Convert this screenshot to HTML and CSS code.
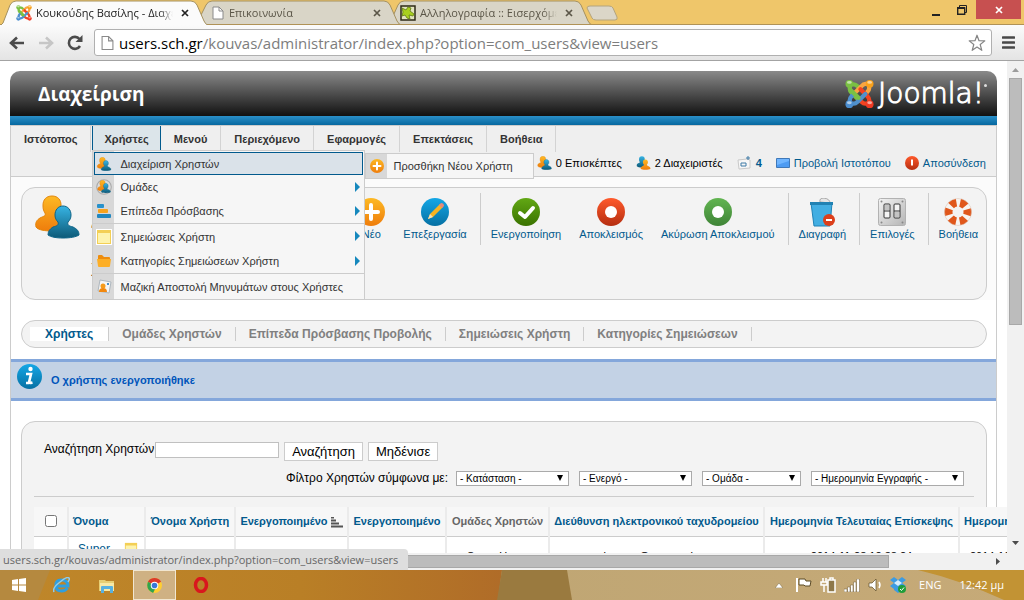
FILE: index.html
```html
<!DOCTYPE html>
<html lang="el">
<head>
<meta charset="utf-8">
<title>Κουκούδης Βασίλης - Διαχείριση</title>
<link rel="stylesheet" href="styles.css">
</head>
<body>
<svg class="defs" width="0" height="0" aria-hidden="true">
  <defs>
    <linearGradient id="gOrange" x1="0" y1="0" x2="0" y2="1"><stop offset="0" stop-color="#fdb924"/><stop offset="1" stop-color="#ef7d0c"/></linearGradient>
    <linearGradient id="gBlue" x1="0" y1="0" x2="0" y2="1"><stop offset="0" stop-color="#37b4e4"/><stop offset="1" stop-color="#0d5a78"/></linearGradient>
    <linearGradient id="gSky" x1="0" y1="0" x2="0" y2="1"><stop offset="0" stop-color="#14a7e6"/><stop offset="1" stop-color="#0670a3"/></linearGradient>
    <linearGradient id="gGreen" x1="0" y1="0" x2="0" y2="1"><stop offset="0" stop-color="#62a814"/><stop offset="1" stop-color="#3a7200"/></linearGradient>
    <linearGradient id="gGreen2" x1="0" y1="0" x2="0" y2="1"><stop offset="0" stop-color="#62b551"/><stop offset="1" stop-color="#3f8437"/></linearGradient>
    <linearGradient id="gRed" x1="0" y1="0" x2="0" y2="1"><stop offset="0" stop-color="#ff5a2c"/><stop offset="1" stop-color="#b52e10"/></linearGradient>
    <linearGradient id="gSteel" x1="0" y1="0" x2="1" y2="1"><stop offset="0" stop-color="#f4f4f4"/><stop offset="1" stop-color="#b4b4b4"/></linearGradient>
    <symbol id="joomla" viewBox="0 0 30 30">
      <g fill="none" stroke-width="4.400" stroke-linecap="round" stroke-linejoin="round">
        <path d="M5 6V10Q5 12 7 14L15 22" stroke="#7ac143"/>
        <path d="M5 5H9Q11 5 13 7L15 9" stroke="#7ac143"/>
        <path d="M25 4.500H21Q19 4.500 17 7L9 15" stroke="#f9a541"/>
        <path d="M25 5V9Q25 11 23 13L21 15" stroke="#f9a541"/>
        <path d="M25 25V21Q25 19 23 17L16 10" stroke="#f44321"/>
        <path d="M25 25H21Q19 25 17 23L15 21" stroke="#f44321"/>
        <path d="M5 25H9Q11 25 13 23L21 15" stroke="#5091cd"/>
        <path d="M5 25V21Q5 19 7 17L9 15" stroke="#5091cd"/>
        <path d="M6 11L14 19" stroke="#7ac143"/>
      </g>
      <circle cx="4.500" cy="4.500" r="4" fill="#7ac143"/><circle cx="25.500" cy="4.500" r="4" fill="#f9a11b"/>
      <circle cx="25.500" cy="25.500" r="4" fill="#f03a24"/><circle cx="4.500" cy="25.500" r="4" fill="#4b8ed0"/>
      <g fill="#fff" opacity=".55"><ellipse cx="4.500" cy="3" rx="2.500" ry="1.500"/><ellipse cx="25.500" cy="3" rx="2.500" ry="1.500"/><ellipse cx="25.500" cy="24" rx="2.500" ry="1.500"/><ellipse cx="4.500" cy="24" rx="2.500" ry="1.500"/></g>
    </symbol>
    <symbol id="users" viewBox="0 0 46 44">
      <path d="M18 1c6 0 9 4 9 9 0 4-1 6-3 9-1 3 1 4 4 5 3 2 4 4 4 9-3 2-7 3-14 3S4 35 2 32c-1-5 1-7 4-9 4-2 6-2 5-5-2-3-2-5-2-8 0-5 3-9 9-9z" fill="url(#gOrange)" stroke="#e3860b"/>
      <path d="M29 11c5 0 8 4 8 9 0 3-1 5-3 7-1 3 1 4 5 5 4 2 6 4 6 8-3 2-9 3-16 3s-12-1-15-3c0-4 2-6 5-8 4-1 6-2 5-5-2-2-3-4-3-7 0-5 3-9 8-9z" fill="url(#gBlue)" stroke="#0d6488"/>
    </symbol>
    <symbol id="users2" viewBox="0 0 46 44">
      <path d="M18 1c6 0 9 4 9 9 0 4-1 6-3 9-1 3 1 4 4 5 3 2 4 4 4 9-3 2-7 3-14 3S4 35 2 32c-1-5 1-7 4-9 4-2 6-2 5-5-2-3-2-5-2-8 0-5 3-9 9-9z" fill="url(#gBlue)"/>
      <path d="M29 11c5 0 8 4 8 9 0 3-1 5-3 7-1 3 1 4 5 5 4 2 6 4 6 8-3 2-9 3-16 3s-12-1-15-3c0-4 2-6 5-8 4-1 6-2 5-5-2-2-3-4-3-7 0-5 3-9 8-9z" fill="url(#gOrange)"/>
    </symbol>
    <symbol id="plus" viewBox="0 0 28 28"><circle cx="14" cy="14" r="14" fill="url(#gOrange)"/><path d="M14 7V21M7 14H21" stroke="#fff" stroke-width="4" stroke-linecap="round"/></symbol>
    <symbol id="note" viewBox="0 0 16 16"><path d="M0 0h16v16H0z" fill="#fff"/><path d="M1 1h14v14H1z" fill="#f3cf55"/><path d="M2 4h12v10H2z" fill="#fdf3ae"/></symbol>
    <symbol id="page" viewBox="0 0 12 14"><path d="M1 1h6l4 4v8H1z" fill="#fff" stroke="#8a8a8a"/><path d="M7 1v4h4" fill="none" stroke="#8a8a8a"/></symbol>
    <symbol id="x" viewBox="0 0 8 8"><path d="M1 1l6 6M7 1l-6 6" stroke="currentColor" stroke-width="1.700"/></symbol>
  </defs>
</svg>

<header class="tabs">
  <svg class="tabs-art" width="640" height="25" viewBox="0 0 640 25" aria-hidden="true">
    <path d="M389 25l9-20q2-4 6-4H575q4 0 6 4l7 16q2 4 5 4z" fill="#d9d5c7" stroke="#a5915f"/>
    <path d="M196 25L206 5q2-4 6-4H384q4 0 6 4l7 16q2 4 5 4z" fill="#d9d5c7" stroke="#a5915f"/>
    <path d="M0 24.500H640" stroke="#b09256"/>
    <path d="M0 26l3-3L10 5q2-4 6-4H191q4 0 6 4l7 16q1 3 5 5z" fill="#fbfbfb" stroke="#a5915f"/>
    <path d="M587 8q0-2 3-2h19q3 0 4 2l4 9q1 3-2 3h-19q-3 0-4-2z" fill="#dbd6c8" stroke="#b3a47e"/>
  </svg>
  <div class="tab tab-on"><svg width="16" height="16"><use href="#joomla"/></svg><span class="tab-title">Κουκούδης Βασίλης - Διαχείριση</span><button class="tab-x" aria-label="Κλείσιμο καρτέλας"><svg width="8" height="8"><use href="#x"/></svg></button></div>
  <div class="tab tab-two"><svg width="12" height="14"><use href="#page"/></svg><span class="tab-title">Επικοινωνία</span><button class="tab-x" aria-label="Κλείσιμο καρτέλας"><svg width="8" height="8"><use href="#x"/></svg></button></div>
  <div class="tab tab-three"><svg width="16" height="16" viewBox="0 0 16 16"><path d="M1 1h14v14H1z" fill="#e2e3bd" stroke="#2e2a17" stroke-width="1.500"/><path d="M2 3l4 2 2-3 3 1-1 3 4 3-1 2-4-1 1 4-3-1-2-3-3 1 1-4z" fill="#a9d01e" stroke="#5e7a10" stroke-width=".800"/></svg><span class="tab-title">Αλληλογραφία :: Εισερχόμενα</span><button class="tab-x" aria-label="Κλείσιμο καρτέλας"><svg width="8" height="8"><use href="#x"/></svg></button></div>
  <div class="win">
    <button class="win-btn" aria-label="Ελαχιστοποίηση"><svg width="8" height="12" viewBox="0 0 8 12"><path d="M0 10h8v2H0z" fill="#222"/></svg></button>
    <button class="win-btn" aria-label="Επαναφορά"><svg width="10" height="10" viewBox="0 0 10 10"><path d="M2.500 2V.500h7v7H8" fill="none" stroke="#222"/><path d="M.700 3h7v6.300h-7z" fill="none" stroke="#222" stroke-width="1.400"/><path d="M0 2h8v2H0z" fill="#222"/></svg></button>
    <button class="win-btn win-close" aria-label="Κλείσιμο"><svg width="8" height="8"><use href="#x"/></svg></button>
  </div>
</header>

<div class="bar">
  <button class="bar-btn" aria-label="Πίσω"><svg width="16" height="14" viewBox="0 0 16 14"><path d="M15 7H3M8 1.500L2 7l6 5.500" fill="none" stroke="#4b4b4b" stroke-width="2.600"/></svg></button>
  <button class="bar-btn" aria-label="Εμπρός"><svg width="16" height="14" viewBox="0 0 16 14"><path d="M1 7h12M8 1.500L14 7l-6 5.500" fill="none" stroke="#c6c6c6" stroke-width="2.600"/></svg></button>
  <button class="bar-btn" aria-label="Ανανέωση"><svg width="16" height="16" viewBox="0 0 16 16"><path d="M13 11A6 6 0 1 1 12.500 4" fill="none" stroke="#4b4b4b" stroke-width="2.600"/><path d="M15.500 0v7h-7z" fill="#4b4b4b"/></svg></button>
  <div class="url">
    <svg width="13" height="16" viewBox="0 0 12 14"><use href="#page"/></svg>
    <span class="url-text"><b>users.sch.gr</b>/kouvas/administrator/index.php?option=com_users&amp;view=users</span>
    <svg width="18" height="18" viewBox="0 0 18 18"><path d="M9 1.200l2 5.500 5.800.200-4.600 3.600 1.600 5.800L9 13l-4.800 3.300 1.600-5.800L1.200 6.900 7 6.700z" fill="#fff" stroke="#858585" stroke-width="1.200" stroke-linejoin="round"/></svg>
  </div>
  <button class="bar-menu" aria-label="Μενού"><svg width="13" height="13" viewBox="0 0 13 13"><path d="M1 1.500h11M1 6.500h11M1 11.500h11" stroke="#484848" stroke-width="2.600" stroke-linecap="round"/></svg></button>
</div>

<div class="view">
  <main class="page">
    <div class="head">
      <h1>Διαχείριση</h1>
      <div class="brand"><svg width="29" height="30"><use href="#joomla"/></svg><span>Joomla!</span><i></i></div>
    </div>
    <div class="frame">
      <nav class="nav">
        <ul class="menu">
          <li><a href="#">Ιστότοπος</a></li>
          <li class="open"><a href="#">Χρήστες</a>
            <ul class="drop">
              <li class="hot"><svg width="15" height="14"><use href="#users"/></svg><a href="#">Διαχείριση Χρηστών</a>
                <ul class="fly"><li><svg width="14" height="14"><use href="#plus"/></svg><a href="#">Προσθήκη Νέου Χρήστη</a></li></ul>
              </li>
              <li class="more"><svg width="16" height="16" viewBox="0 0 46 46"><circle cx="23" cy="23" r="21" fill="#dcdcdc" stroke="#aaa" stroke-width="3"/><use href="#users" x="3" y="3" width="40" height="38"/></svg><a href="#">Ομάδες</a></li>
              <li class="more"><svg width="16" height="16" viewBox="0 0 16 16"><rect x="1" y="1" width="7" height="4" rx="1" fill="#2791cb"/><rect x="2" y="6" width="10" height="4" rx="1" fill="#f7a31d"/><rect x="1" y="11" width="14" height="4" rx="1" fill="#2187c0"/></svg><a href="#">Επίπεδα Πρόσβασης</a></li>
              <li class="more split"><svg width="16" height="16"><use href="#note"/></svg><a href="#">Σημειώσεις Χρήστη</a></li>
              <li class="more"><svg width="16" height="12" viewBox="0 0 16 12"><path d="M2 4V1q0-1 1-1h3l2 2h5q1 0 1 1v1z" fill="#ee8d0d"/><path d="M1 4h14l-1 7q0 1-1 1H3q-1 0-1-1z" fill="#fcae26"/></svg><a href="#">Κατηγορίες Σημειώσεων Χρήστη</a></li>
              <li class="split"><svg width="16" height="16" viewBox="0 0 16 16"><path d="M4 1l11 2-2 11-11-2z" fill="#f5f5f5" stroke="#aeb7bf"/><circle cx="7" cy="7" r="2.500" fill="#f59b1c"/><path d="M3 13q0-4 4-4t4 4z" fill="#f2880f"/><path d="M11 4h2v2h-2z" fill="#4a90c8"/></svg><a href="#">Μαζική Αποστολή Μηνυμάτων στους Χρήστες</a></li>
            </ul>
          </li>
          <li><a href="#">Μενού</a></li>
          <li><a href="#">Περιεχόμενο</a></li>
          <li><a href="#">Εφαρμογές</a></li>
          <li><a href="#">Επεκτάσεις</a></li>
          <li><a href="#">Βοήθεια</a></li>
        </ul>
        <div class="status">
          <span><svg width="15" height="14"><use href="#users"/></svg>0 Επισκέπτες</span>
          <span><svg width="15" height="14"><use href="#users2"/></svg>2 Διαχειριστές</span>
          <a href="#"><svg width="15" height="14" viewBox="0 0 15 14"><path d="M1 4l9-1 3 1v8l-11 1z" fill="#f7f7f7" stroke="#c9c9c9"/><path d="M4 7h5v3H4zM10 1h2v2h-2z" fill="none" stroke="#3f7ba6"/></svg><b>4</b></a>
          <a href="#"><svg width="14" height="10" viewBox="0 0 14 10"><path d="M.500.500h13v9H.500z" fill="#6fb5ff" stroke="#3f78b8"/><path d="M1 7l12-4v6H1z" fill="#4d9bf2"/></svg>Προβολή Ιστοτόπου</a>
          <a href="#"><svg width="14" height="14" viewBox="0 0 14 14"><circle cx="7" cy="7" r="7" fill="url(#gRed)"/><path d="M7 3.500v6" stroke="#fff" stroke-width="2"/></svg>Αποσύνδεση</a>
        </div>
      </nav>

      <section class="top">
        <div class="tools">
          <svg width="46" height="44"><use href="#users"/></svg>
          <h2>Διαχείριση Χρηστών</h2>
          <div class="acts">
            <a href="#"><svg width="28" height="29" viewBox="0 0 28 29"><use href="#plus" width="28" height="28"/></svg>Νέο</a>
            <a href="#"><svg width="28" height="29" viewBox="0 0 28 29"><circle cx="14" cy="14" r="14" fill="url(#gSky)"/><path d="M7 21l2-5L19 6l3 3-10 10z" fill="#f7b322"/><path d="M7 21l2-5 3 3z" fill="#f5dfb8"/><path d="M18 7l2-2q3 0 3 3l-2 2z" fill="#e5897c"/></svg>Επεξεργασία</a>
            <hr>
            <a href="#"><svg width="28" height="29" viewBox="0 0 28 29"><circle cx="14" cy="14" r="14" fill="url(#gGreen)"/><path d="M8 15l5 4 8-9" fill="none" stroke="#fff" stroke-width="4" stroke-linecap="round" stroke-linejoin="round"/></svg>Ενεργοποίηση</a>
            <a href="#"><svg width="28" height="29" viewBox="0 0 28 29"><circle cx="14" cy="14" r="14" fill="url(#gRed)"/><circle cx="14" cy="14" r="6" fill="#fff"/></svg>Αποκλεισμός</a>
            <a href="#"><svg width="28" height="29" viewBox="0 0 28 29"><circle cx="14" cy="14" r="14" fill="url(#gGreen2)"/><circle cx="14" cy="14" r="6" fill="#fff"/></svg>Ακύρωση Αποκλεισμού</a>
            <hr>
            <a href="#"><svg width="28" height="29" viewBox="0 0 28 29"><path d="M12 4q-1-4 4-4 6 1 6 5z" fill="#e6e6e6" stroke="#a7a7a7"/><path d="M3 5h21l-2 23H6z" fill="#42aee2" stroke="#1f82b6"/><path d="M2 4h23v3H2z" fill="#2182b3"/><circle cx="21" cy="22" r="6" fill="#dc3f1b"/><path d="M18 22h6" stroke="#fff" stroke-width="2"/></svg>Διαγραφή</a>
            <hr>
            <a href="#"><svg width="28" height="29" viewBox="0 0 28 29"><rect x=".500" y=".500" width="27" height="27" rx="2" fill="url(#gSteel)" stroke="#b2b2b2"/><g fill="#888"><circle cx="3.500" cy="3.500" r="1"/><circle cx="24.500" cy="3.500" r="1"/><circle cx="3.500" cy="24.500" r="1"/><circle cx="24.500" cy="24.500" r="1"/></g><rect x="6" y="6" width="6" height="14" rx="1" fill="#f4f4f4" stroke="#333"/><rect x="16" y="6" width="6" height="14" rx="1" fill="#f4f4f4" stroke="#333"/><path d="M7 7h4v5H7zM17 14h4v5h-4z" fill="#c4c4c4"/><path d="M6 13h6M16 13h6" stroke="#333"/></svg>Επιλογές</a>
            <hr>
            <a href="#"><svg width="28" height="29" viewBox="0 0 28 29"><circle cx="14" cy="14" r="9.500" fill="none" stroke="#f7f4f1" stroke-width="8"/><circle cx="14" cy="14" r="9.500" fill="none" stroke="#e0571b" stroke-width="8" stroke-dasharray="6.200 3.748" stroke-dashoffset="3.100"/><circle cx="14" cy="14" r="13.500" fill="none" stroke="#d9bfae" stroke-width=".500"/></svg>Βοήθεια</a>
          </div>
        </div>
      </section>

      <ul class="subs">
        <li class="cur"><a href="#">Χρήστες</a></li><li><a href="#">Ομάδες Χρηστών</a></li><li><a href="#">Επίπεδα Πρόσβασης Προβολής</a></li><li><a href="#">Σημειώσεις Χρήστη</a></li><li><a href="#">Κατηγορίες Σημειώσεων</a></li>
      </ul>

      <div class="msg"><svg width="25" height="25" viewBox="0 0 25 25"><circle cx="12.500" cy="12.500" r="12.500" fill="url(#gSky)"/><circle cx="13.500" cy="5" r="2.200" fill="#fff"/><path d="M9 10h5l-2 8.500q0 1 3.500 0M9 19h3" fill="none" stroke="#fff" stroke-width="2.600"/></svg><span>Ο χρήστης ενεργοποιήθηκε</span></div>

      <section class="list">
        <form class="search">
          <label for="q">Αναζήτηση Χρηστών</label><input id="q" type="text"><button type="button">Αναζήτηση</button><button type="button">Μηδένισε</button>
        </form>
        <div class="filters">
          <label for="f1">Φίλτρο Χρηστών σύμφωνα με:</label>
          <span class="sel sel-m"><select id="f1"><option>- Κατάσταση -</option></select></span>
          <span class="sel sel-m"><select aria-label="Ενεργό"><option>- Ενεργό -</option></select></span>
          <span class="sel sel-s"><select aria-label="Ομάδα"><option>- Ομάδα -</option></select></span>
          <span class="sel sel-l"><select aria-label="Ημερομηνία Εγγραφής"><option>- Ημερομηνία Εγγραφής -</option></select></span>
        </div>
        <table>
          <colgroup><col class="c1"><col class="c2"><col class="c3"><col class="c4"><col class="c5"><col class="c6"><col class="c7"><col class="c8"><col class="c9"></colgroup>
          <thead><tr>
            <th><input type="checkbox" aria-label="Επιλογή όλων"></th>
            <th class="left"><a href="#">Όνομα</a></th>
            <th><a href="#">Όνομα Χρήστη</a></th>
            <th><a href="#">Ενεργοποιημένο <svg width="12" height="11" viewBox="0 0 12 11"><path d="M0 .500h3M0 3.500h5M0 6.500h8M0 9.500h12" stroke="#555" stroke-width="2"/></svg></a></th>
            <th><a href="#">Ενεργοποιημένο</a></th>
            <th class="plain">Ομάδες Χρηστών</th>
            <th><a href="#">Διεύθυνση ηλεκτρονικού ταχυδρομείου</a></th>
            <th><a href="#">Ημερομηνία Τελευταίας Επίσκεψης</a></th>
            <th class="left"><a href="#">Ημερομηνία Εγγραφής</a></th>
          </tr></thead>
          <tbody><tr>
            <td></td>
            <td class="who"><a href="#">Super User</a><svg width="14" height="14"><use href="#note"/></svg></td>
            <td></td><td></td><td></td><td>Super Users</td><td>kouvas@users.sch.gr</td><td>2014-11-28 12:38:24</td><td>2014-10-20 10:12:30</td>
          </tr></tbody>
        </table>
      </section>
    </div>
  </main>
  <div class="vbar"><svg width="7" height="5" viewBox="0 0 7 5"><path d="M0 4l3.500-4L7 4z" fill="#9c9c9c"/></svg><div class="vthumb"></div><svg width="7" height="5" viewBox="0 0 7 5"><path d="M0 0h7L3.500 4z" fill="#4c4c4c"/></svg></div>
</div>
<div class="hbar"><div class="hthumb"></div><svg width="5" height="7" viewBox="0 0 5 7"><path d="M0 0v7l4-3.500z" fill="#4c4c4c"/></svg><div class="tip">users.sch.gr/kouvas/administrator/index.php?option=com_users&amp;view=users</div></div>

<footer class="task">
  <svg class="task-art" viewBox="0 0 1024 30" preserveAspectRatio="none" aria-hidden="true">
    <defs><linearGradient id="t1"><stop offset="0" stop-color="#bf872a"/><stop offset=".600" stop-color="#b97f26"/><stop offset="1" stop-color="#b06c28"/></linearGradient><linearGradient id="t2"><stop offset="0" stop-color="#b9a26f"/><stop offset="1" stop-color="#c6aa78"/></linearGradient></defs>
    <path d="M0 0h1024v30H0z" fill="url(#t2)"/><path d="M0 0h502l-4 30H0z" fill="url(#t1)"/><path d="M0 0h50L38 30H0z" fill="#b5893f"/><path d="M502 0h65l5 30h-75z" fill="#9a7a3f"/><path d="M918 0h106v30h-20Q960 10 918 0z" fill="#c29334"/>
  </svg>
  <button aria-label="Έναρξη"><svg width="14" height="14" viewBox="0 0 14 14"><path d="M0 2l6-1v5.500H0zM7 1l7-1v6.500H7zM0 7.500h6V13l-6-1zM7 7.500h7V14l-7-1z" fill="#fff"/></svg></button>
  <button aria-label="Internet Explorer"><svg width="17" height="16" viewBox="0 0 17 16"><path d="M4 9h11q0-6-6.500-6T3 9q0 5 5.500 5 4 0 6-3" fill="none" stroke="#2f9fe0" stroke-width="3"/><path d="M1 15q-2-4 6-10 7-6 9-4 1 1-1 4" fill="none" stroke="#8ccdf0" stroke-width="1.500"/></svg></button>
  <button aria-label="Εξερεύνηση"><svg width="16" height="15" viewBox="0 0 16 15"><path d="M0 2h6l1 1h8v10H0z" fill="#e7cf75"/><path d="M1 5h14v8H1z" fill="#f8e9a6"/><path d="M2 15V9q0-1 1-1h10q1 0 1 1v6h-3v-4H5v4z" fill="#58b1e0"/></svg></button>
  <button class="live" aria-label="Chrome"><svg width="15" height="15" viewBox="0 0 16 16"><circle cx="8" cy="8" r="8" fill="#ffce33"/><path d="M8 8L1 4q2-4 7-4t7 4z" fill="#dc3a2b"/><path d="M8 8L1 4q-3 8 5.500 12L10 9z" fill="#31a350"/><circle cx="8" cy="8" r="4" fill="#fff"/><circle cx="8" cy="8" r="3" fill="#3878d6"/></svg></button>
  <button aria-label="Opera"><svg width="16" height="16" viewBox="0 0 16 16"><ellipse cx="8" cy="8" rx="5.500" ry="6.500" fill="none" stroke="#d9171d" stroke-width="3.500"/></svg></button>
  <div class="tray">
    <svg class="tray-up" width="8" height="5" viewBox="0 0 8 5"><path d="M0 5l4-5 4 5z" fill="#fff" stroke="#77653f" stroke-width=".500"/></svg>
    <svg width="16" height="16" viewBox="0 0 16 16"><path d="M1 1v14" stroke="#fff" stroke-width="2"/><path d="M3 2h6l1 2h5l-1 5H9L8 8H3z" fill="#fff" stroke="#5b4a25"/></svg>
    <svg width="16" height="16" viewBox="0 0 16 16"><path d="M3 1v4M6 1v4M1 5h6v3H1zM4 8v7" stroke="#fff" stroke-width="1.500" fill="none"/><path d="M8 3h7v12H8zM10 1h3v2h-3z" fill="#8e784a" stroke="#fff" stroke-width="1.500"/></svg>
    <svg width="16" height="13" viewBox="0 0 16 13"><path d="M0 10h3v3H0zM3.500 8h2.500v5H3.500zM6.500 6H9v7H6.500zM9.500 3H12v10H9.500zM12.500 0h3v13h-3z" fill="#fff" stroke="#6e5b33" stroke-width=".500"/></svg>
    <svg width="14" height="14" viewBox="0 0 14 14"><path d="M1 5h3l4-4v12L4 9H1z" fill="#fff" stroke="#5b4a25" stroke-width=".700"/><path d="M11 4q2 3 0 6" fill="none" stroke="#fff" stroke-width="1.500"/></svg>
    <svg width="16" height="16" viewBox="0 0 16 16"><path d="M0 3l4-3 4 3 4-3 4 3-4 3 4 3-4 3v1l-4 3-4-3v-1L0 9l4-3z" fill="#3c9be2"/><path d="M4 6l4-3 4 3-4 3z" fill="#d4ecfb"/><circle cx="12" cy="12" r="4" fill="#1f9e3a"/><path d="M10 12l1.500 1.500L14 10.500" fill="none" stroke="#fff"/></svg>
    <span>ENG</span><span class="clock">12:42 μμ</span>
  </div>
</footer>
</body>
</html>
```
FILE: styles.css
```css
* { box-sizing: border-box; }
html, body { height: 100%; margin: 0; }
body { display: flex; flex-direction: column; overflow: hidden; background: #fff; color: #000; font: 11px/14px "Liberation Sans", Arial, sans-serif; }
ul { list-style: none; margin: 0; padding: 0; }
a { color: #025a8d; text-decoration: none; }
button { border: 0; background: none; padding: 0; color: inherit; font: inherit; }
svg { flex: none; }
.defs { position: absolute; }

/* browser chrome */
.tabs { position: relative; display: flex; height: 25px; flex: none; background: #efc66a; font: 11px/16px "Open Sans", "Noto Sans", sans-serif; border-bottom: 1px solid #b09256; }
.tabs-art { position: absolute; left: 0; top: 0; }
.tab { position: relative; display: flex; align-items: center; gap: 5px; width: 196px; padding: 1px 7px 0 16px; color: #5b5648; }
.tab-on { gap: 4px; color: #222; padding-right: 3px; }
.tab-three { gap: 4px; padding: 1px 11px 0 8px; }
.tab-title { flex: 1; overflow: hidden; white-space: nowrap; -webkit-mask-image: linear-gradient(90deg, #000 90%, transparent); mask-image: linear-gradient(90deg, #000 90%, transparent); }
.tab-x { display: flex; padding: 4px; }
.win { display: flex; margin: 0 3px 0 auto; }
.win-btn { display: flex; width: 26px; height: 19px; align-items: center; justify-content: center; }
.win-close { width: 45px; background: #c75050; color: #fff; margin-left: 1px; }
.bar { display: flex; align-items: center; height: 36px; flex: none; padding: 0 9px 0 7px; background: linear-gradient(#fbfbfb, #e4e4e4); border-bottom: 1px solid #a3a3a3; }
.bar-btn { display: flex; width: 29px; padding-left: 2px; }
.url { display: flex; align-items: center; flex: 1; height: 27px; padding: 0 5px 0 6px; gap: 5px; background: #fff; border: 1px solid #b0b0b0; border-radius: 3px; }
.url-text { flex: 1; overflow: hidden; white-space: nowrap; color: #7d7d7d; font: 15px/20px "Open Sans", "Noto Sans", sans-serif; }
.url-text b { font-weight: 400; color: #000; }
.bar-menu { display: flex; padding: 0 0 0 10px; }

/* page */
.view { display: flex; flex: 1; min-height: 0; }
.page { flex: 1; min-width: 0; overflow: hidden; padding: 10px 10px 0; }
.head { display: flex; align-items: center; justify-content: space-between; height: 54px; padding: 0 10px 9px 28px; border-radius: 10px 10px 0 0; background: linear-gradient(#2a8fc8, #0668a0) bottom / 100% 9px no-repeat, linear-gradient(#8a8a8a, #111 45px); color: #fff; }
.head h1 { margin: 0; font: bold 19px/24px "Open Sans", "Noto Sans", sans-serif; }
.brand { display: flex; align-items: center; gap: 4px; font: 200 28px/30px "DejaVu Sans", sans-serif; -webkit-text-stroke: 1px #fff; }
.brand i { width: 3px; height: 3px; margin: -16px 0 0 -4px; border-radius: 2px; background: #ddd; }
.frame { border: solid #ccc; border-width: 0 1px; }
.nav { height: 52px; background: #efefef; border-bottom: 1px solid #ccc; border-top: 1px solid #ccc; }
.menu { display: flex; height: 26px; }
.menu > li { position: relative; border-right: 1px solid #d3d3d3; }
.menu > li > a { display: block; padding: 6px 13px; font-weight: bold; color: #333; }
.menu > .open { background: #dce5ea; border: solid #025a8d; border-width: 0 1px; margin-left: 1px; }
.menu > .open > a { padding: 6px 11px; }
.drop { position: absolute; z-index: 3; left: -1px; top: 24px; width: 273px; border: 1px solid #ccc; background: linear-gradient(90deg, #d8d8d8 21px, #f6f6f6 21px); }
.drop li { position: relative; display: flex; align-items: center; height: 24px; padding-left: 3px; white-space: nowrap; }
.drop li svg { width: 16px; margin-right: 8px; }
.drop li a { color: #333; }
.drop .hot { height: 23px; margin: 1px 1px 0; padding-left: 1px; border: 1px solid #025a8d; background: #dae2e9; }
.drop .split { border-top: 1px solid #ccc; height: 26px; }
.drop .more::after { content: ""; position: absolute; right: 4px; top: 7px; border: solid transparent; border-width: 5px 0 5px 5px; border-left-color: #1688bd; }
.drop .fly { position: absolute; left: 270px; top: 0; width: 169px; border: 1px solid #ccc; background: linear-gradient(90deg, #d8d8d8 21px, #f6f6f6 21px); }
.drop .fly svg { margin-right: 8px; }
.status { display: flex; justify-content: flex-end; gap: 14px; height: 22px; padding-right: 10px; }
.status > * { display: flex; align-items: center; gap: 4px; white-space: nowrap; }
.top { padding: 10px 9px 0 10px; background: #fbfbfb; }
.tools { display: flex; align-items: flex-start; height: 113px; padding: 7px 0 0 12px; border: 1px solid #ccc; border-radius: 14px; background: #f3f3f3; }
.tools h2 { margin: 3px 0 0 11px; width: 120px; font: bold 18px/48px "Liberation Sans", Arial, sans-serif; color: #222; }
.acts { display: flex; margin-left: auto; margin-top: 3px; }
.acts a { display: flex; flex-direction: column; align-items: center; padding: 0 8px; white-space: nowrap; }
.acts a + a { margin-left: 2px; }
.acts hr { width: 1px; height: 52px; margin: -5px 2px 0 5px; border: 0; background: #ccc; }
.subs { display: flex; margin: 20px 9px 0 10px; padding: 6px 8px; border: 1px solid #ccc; border-radius: 14px; background: #f3f3f3; }
.subs li { padding: 0 13px; border-right: 1px solid #ccc; font-weight: bold; font-size: 12px; white-space: nowrap; }
.subs a { color: #808080; }
.subs .cur { padding: 0 15px; background: #fff; }
.subs .cur a { color: #025a8d; }
.msg { display: flex; gap: 9px; align-items: flex-start; height: 42px; margin-top: 11px; padding: 2px 6px; border: solid #84a7db; border-width: 3px 0; background: #c3d2e5; color: #0055bb; font-weight: bold; }
.msg span { padding-top: 9px; }
.list { margin: 20px 9px 0 10px; height: 300px; padding: 20px 12px; border: 1px solid #ccc; border-radius: 14px; background: #f3f3f3; }
.search { display: flex; align-items: flex-start; padding-left: 10px; font-size: 12px; }
.search label { margin-right: 1px; }
.search input { width: 124px; height: 16px; margin-right: 5px; padding: 0 2px; border: 1px solid #c0c0c0; }
.search button { height: 19px; margin-right: 5px; padding: 0 7px; border: 1px solid #ccc; background: #fff; font-size: 13px; }
.filters { display: flex; justify-content: flex-end; gap: 10px; padding: 10px 10px 10px 0; border-bottom: 1px solid #ccc; font-size: 12px; }
.filters label { margin-right: -2px; line-height: 14px; }
.sel { position: relative; height: 15px; }
.sel select { display: block; width: 100%; height: 15px; padding: 0 3px; border: 1px solid #aaa; border-radius: 0; appearance: none; background: #fff; color: #000; font: 10px/13px "Liberation Sans", Arial, sans-serif; }
.sel::after { content: ""; position: absolute; right: 6px; top: 4px; border: solid transparent; border-width: 6px 3px 0; border-top-color: #000; }
.sel-m { width: 113px; }
.sel-s { width: 99px; }
.sel-l { width: 153px; }
table { width: 1050px; margin-top: 10px; border-collapse: collapse; table-layout: fixed; }
.c1 { width: 34px; } .c2 { width: 77px; } .c3 { width: 90px; } .c4 { width: 113px; } .c5 { width: 98px; } .c6 { width: 103px; } .c7 { width: 215px; } .c8 { width: 195px; }
th { height: 29px; padding: 0 4px; border: solid #ccc; border-width: 0 0 1px; border-right: 2px solid #ebebeb; background: #f7f7f7; white-space: nowrap; }
th svg { vertical-align: -3px; }
th input { display: block; width: 12px; height: 12px; margin: 0 auto; }
th.left, td.who { text-align: left; }
th.plain { color: #666; }
td { height: 40px; padding: 0 4px; border-right: 2px solid #ebebeb; background: #fff; text-align: center; white-space: nowrap; }
td.who { padding: 5px 6px 0 9px; vertical-align: top; white-space: normal; }
.who a { display: inline-block; width: 46px; vertical-align: top; font-size: 12px; }

/* scrollbars and link address */
.vbar { display: flex; flex-direction: column; align-items: center; width: 17px; padding: 7px 0; background: #f1f1f1; }
.vthumb { width: 13px; height: 247px; margin: 5px 0 auto; border: 1px solid #a8a8a8; background: #bcbcbc; }
.hbar { position: relative; display: flex; align-items: center; justify-content: space-between; height: 17px; flex: none; padding-right: 23px; background: #f1f1f1; }
.hthumb { width: 872px; height: 13px; margin-left: 17px; border: 1px solid #a8a8a8; background: #bcbcbc; }
.tip { position: absolute; left: 0; bottom: 0; z-index: 4; height: 21px; padding: 0 10px 0 3px; border-radius: 0 4px 0 0; background: #dedede; color: #666; white-space: nowrap; font: 11px/21px "Open Sans", "Noto Sans", sans-serif; }

/* taskbar */
.task { position: relative; display: flex; height: 30px; flex: none; }
.task-art { position: absolute; width: 100%; height: 100%; }
.task button { position: relative; display: flex; width: 46px; align-items: center; justify-content: center; }
.task button:first-of-type { width: 38px; }
.task .live { width: 43px; margin: 0 2px 0 3px; border: 1px solid #f1e6d0; background: #cfb183; }
.tray { position: relative; display: flex; align-items: center; gap: 8px; margin-left: auto; padding-right: 20px; color: #fff; font: 11px/16px "Open Sans", "Noto Sans", sans-serif; }
.tray-up { margin-right: 5px; }
.tray span { margin-left: 5px; }
.tray .clock { margin-left: 10px; }
```
